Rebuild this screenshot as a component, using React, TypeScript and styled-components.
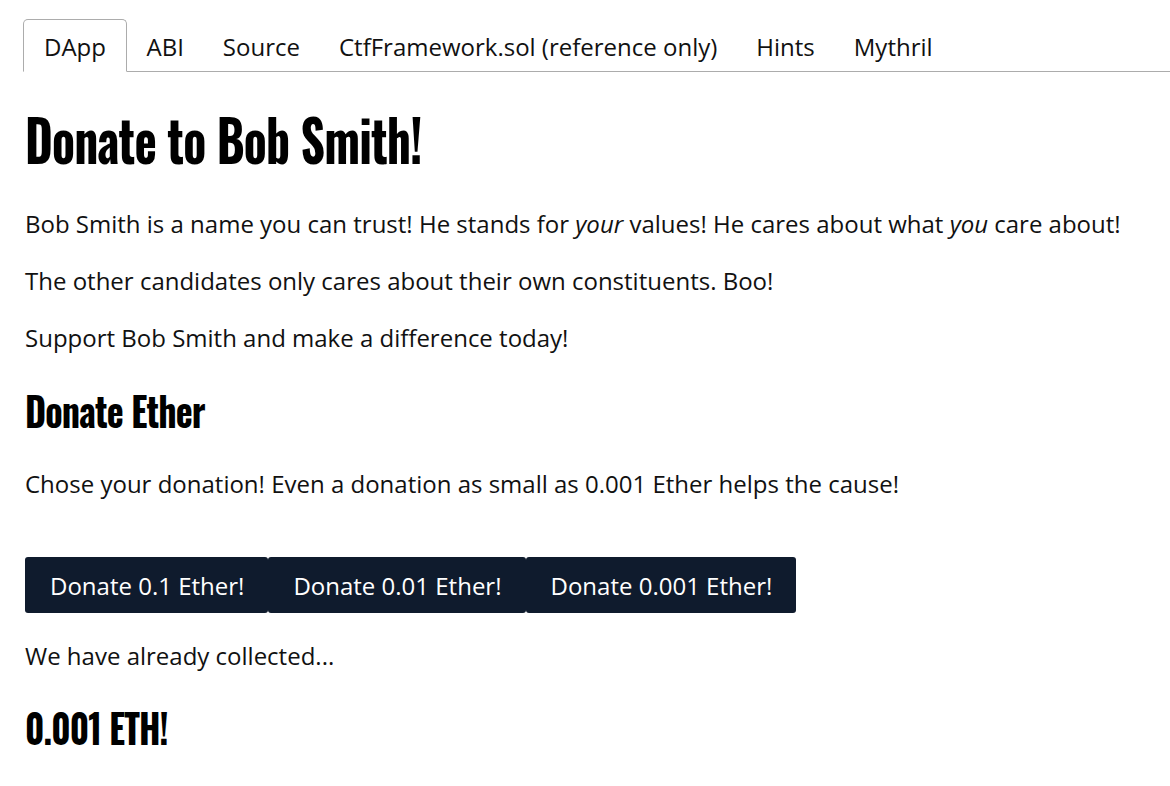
import React from "react";
import styled, { createGlobalStyle } from "styled-components";

const GlobalStyle = createGlobalStyle`
  html, body {
    margin: 0;
    padding: 0;
    background: #ffffff;
  }
  body {
    font-family: "Open Sans", "Noto Sans", sans-serif;
    font-size: 24px;
    color: #111111;
  }
  * { box-sizing: border-box; }
`;

const Page = styled.div`
  display: flex;
  flex-direction: column;
  padding: 19px 0 0 25px;
`;

const TabBar = styled.nav`
  display: flex;
  align-items: flex-end;
  margin-left: -2px;
  border-bottom: 1px solid #acacac;
  height: 53px;
`;

const Tab = styled.div<{ $active?: boolean }>`
  display: flex;
  align-items: center;
  height: 53px;
  margin-bottom: -1px;
  padding: 1px ${(p) => (p.$active ? "20px" : "18.5px")} 0;
  font-size: 24px;
  color: #111111;
  border: 1px solid ${(p) => (p.$active ? "#acacac" : "transparent")};
  border-bottom-color: ${(p) => (p.$active ? "#ffffff" : "transparent")};
  border-radius: 5px 5px 0 0;
  background: ${(p) => (p.$active ? "#ffffff" : "transparent")};
  white-space: nowrap;
`;

const Content = styled.main`
  display: flex;
  flex-direction: column;
  align-items: flex-start;
`;

const headingFont = `"Oswald", "Liberation Sans Narrow", "DejaVu Sans Condensed", sans-serif`;

const Title = styled.h1`
  margin: 33px 0 35px;
  font-family: ${headingFont};
  font-weight: 700;
  font-size: 57px;
  line-height: 66px;
  color: #000000;
  letter-spacing: -1px;
  white-space: nowrap;
  transform: scaleX(0.835);
  transform-origin: left center;
`;

const Subtitle = styled.h2<{ $top: number; $bottom: number; $squeeze: number }>`
  margin: ${(p) => p.$top}px 0 ${(p) => p.$bottom}px;
  font-family: ${headingFont};
  font-weight: 700;
  font-size: 41px;
  line-height: 49px;
  color: #000000;
  letter-spacing: -1px;
  white-space: nowrap;
  transform: scaleX(${(p) => p.$squeeze});
  transform-origin: left center;
`;

const Para = styled.p<{ $bottom?: number }>`
  margin: 0 0 ${(p) => p.$bottom ?? 21}px;
  font-size: 24px;
  line-height: 36px;
  color: #111111;
`;

const ButtonGroup = styled.div`
  display: flex;
  margin: 0 0 25px;
`;

const DonateButton = styled.button`
  height: 56px;
  padding: 0 24px 0 25px;
  border: none;
  border-radius: 3px;
  background: #0f1b2d;
  color: #ffffff;
  font-family: "Open Sans", "Noto Sans", sans-serif;
  font-size: 24px;
  cursor: pointer;
`;

const tabs = ["DApp", "ABI", "Source", "CtfFramework.sol (reference only)", "Hints", "Mythril"];

export default function App() {
  return (
    <>
      <GlobalStyle />
      <Page>
        <TabBar>
          {tabs.map((t, i) => (
            <Tab key={t} $active={i === 0}>
              {t}
            </Tab>
          ))}
        </TabBar>
        <Content>
          <Title>Donate to Bob Smith!</Title>
          <Para>
            Bob Smith is a name you can trust! He stands for <em>your</em> values! He cares about what <em>you</em> care about!
          </Para>
          <Para>The other candidates only cares about their own constituents. Boo!</Para>
          <Para>Support Bob Smith and make a difference today!</Para>
          <Subtitle $top={8} $bottom={32} $squeeze={0.88}>Donate Ether</Subtitle>
          <Para $bottom={55}>Chose your donation! Even a donation as small as 0.001 Ether helps the cause!</Para>
          <ButtonGroup>
            <DonateButton>Donate 0.1 Ether!</DonateButton>
            <DonateButton>Donate 0.01 Ether!</DonateButton>
            <DonateButton>Donate 0.001 Ether!</DonateButton>
          </ButtonGroup>
          <Para>We have already collected...</Para>
          <Subtitle $top={7} $bottom={0} $squeeze={0.86}>0.001 ETH!</Subtitle>
        </Content>
      </Page>
    </>
  );
}
